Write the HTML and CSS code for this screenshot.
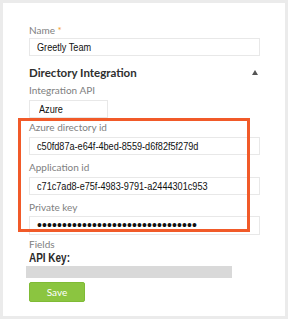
FILE: index.html
```html
<!DOCTYPE html>
<html>
<head>
<meta charset="utf-8">
<link rel="stylesheet" href="styles.css">
</head>
<body>
<div class="card">
  <div class="form">
    <div class="label l-name">Name <span class="req">*</span></div>
    <div class="input wide"><span class="val">Greetly Team</span></div>
    <div class="section">
      <span class="title">Directory Integration</span>
      <span class="arrow"></span>
    </div>
    <div class="label l-api">Integration API</div>
    <div class="input small"><span class="val">Azure</span></div>
    <div class="label l-first">Azure directory id</div>
    <div class="input wide"><span class="val">c50fd87a-e64f-4bed-8559-d6f82f5f279d</span></div>
    <div class="label l-next">Application id</div>
    <div class="input wide"><span class="val">c71c7ad8-e75f-4983-9791-a2444301c953</span></div>
    <div class="label l-key">Private key</div>
    <div class="input wide dots">••••••••••••••••••••••••••••••••</div>
    <div class="label l-fields">Fields</div>
    <div class="apikey"><span class="val">API Key:</span></div>
    <div class="graybar"></div>
    <button class="save">Save</button>
  </div>
  <div class="highlight"></div>
</div>
</body>
</html>
```
FILE: styles.css
```css
html, body {
  margin: 0;
  padding: 0;
}
body {
  background: #ebebeb;
  width: 288px;
  height: 319px;
  padding: 3px;
  box-sizing: border-box;
}
.card {
  position: relative;
  background: #ffffff;
  height: 313px;
  box-sizing: border-box;
  padding: 21px 0 0 26px;
}
.form {
  display: flex;
  flex-direction: column;
  align-items: flex-start;
}
.label {
  font-family: "Lato", "Open Sans", sans-serif;
  font-size: 10px;
  line-height: 12px;
  color: #808080;
}
.req {
  color: #f5a030;
}
.l-name { margin-bottom: 2px; }
.input {
  box-sizing: border-box;
  height: 18px;
  border: 1px solid #e8e8e8;
  background: #fff;
  font-family: "Liberation Sans", Arial, sans-serif;
  font-size: 11px;
  line-height: 16px;
  color: #111;
  padding-left: 7px;
  white-space: nowrap;
}
.val {
  display: inline-block;
  transform: scaleX(0.83);
  transform-origin: 0 50%;
}
.wide { width: 231px; }
.small { width: 79px; padding-left: 9px; }
.section {
  display: flex;
  justify-content: space-between;
  align-items: center;
  width: 231px;
  margin-top: 8px;
  height: 16px;
}
.title {
  font-family: "Lato", "Open Sans", sans-serif;
  font-weight: bold;
  font-size: 11.5px;
  color: #2e2e2e;
}
.arrow {
  width: 0;
  height: 0;
  border-left: 3px solid transparent;
  border-right: 3px solid transparent;
  border-bottom: 5px solid #555;
  margin-right: 2px;
}
.l-api { margin-top: 4px; margin-bottom: 4px; }
.l-first { margin-top: 3px; margin-bottom: 4px; }
.l-next { margin-top: 6px; margin-bottom: 4px; }
.l-key { margin-top: 6px; margin-bottom: 3px; }
.dots {
  font-size: 14px;
  letter-spacing: 0.1px;
  height: 19px;
  line-height: 17px;
  color: #111;
}
.l-fields { margin-top: 3px; }
.apikey {
  font-family: "Liberation Sans", Arial, sans-serif;
  font-weight: bold;
  font-size: 12px;
  line-height: 14px;
  color: #2a2a2a;
  margin-top: 1px;
}
.graybar {
  width: 206px;
  height: 12px;
  background: #d9d9d9;
  margin-left: -3px;
  margin-top: 1px;
}
.save {
  margin-top: 4px;
  width: 56px;
  height: 20px;
  border: 1px solid #7fbb35;
  border-radius: 2px;
  background: #8bc540;
  color: #fff;
  font-family: "Lato", "Open Sans", sans-serif;
  font-size: 10px;
  padding: 0;
}
.highlight {
  position: absolute;
  left: 15px;
  top: 115px;
  width: 232px;
  height: 114px;
  box-sizing: border-box;
  border: 3px solid #f15a29;
  pointer-events: none;
}
```
